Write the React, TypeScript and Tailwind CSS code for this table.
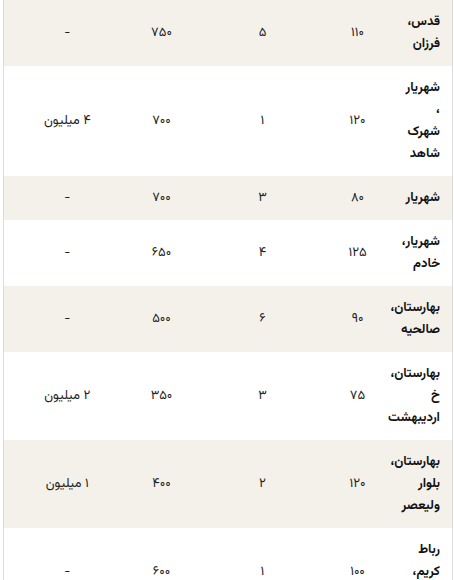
type Row = {
  area: string[];
  size: string;
  rooms: string;
  price: string;
  deposit: string;
};

const rows: Row[] = [
  { area: ["قدس،", "فرزان"], size: "۱۱۰", rooms: "۵", price: "۷۵۰", deposit: "-" },
  { area: ["شهریار", "،", "شهرک", "شاهد"], size: "۱۲۰", rooms: "۱", price: "۷۰۰", deposit: "۴ میلیون" },
  { area: ["شهریار"], size: "۸۰", rooms: "۳", price: "۷۰۰", deposit: "-" },
  { area: ["شهریار،", "خادم"], size: "۱۲۵", rooms: "۴", price: "۶۵۰", deposit: "-" },
  { area: ["بهارستان،", "صالحیه"], size: "۹۰", rooms: "۶", price: "۵۰۰", deposit: "-" },
  { area: ["بهارستان،", "خ", "اردیبهشت"], size: "۷۵", rooms: "۳", price: "۳۵۰", deposit: "۲ میلیون" },
  { area: ["بهارستان،", "بلوار", "ولیعصر"], size: "۱۲۰", rooms: "۲", price: "۴۰۰", deposit: "۱ میلیون" },
  { area: ["رباط", "کریم،", "نصیرآباد"], size: "۱۰۰", rooms: "۱", price: "۶۰۰", deposit: "-" },
];

export default function App() {
  return (
    <div className="min-h-screen bg-white pl-[3px] overflow-hidden">
      <table
        dir="rtl"
        className="w-[450px] table-fixed border-collapse border-x border-[#dcdcdc] text-[13px] leading-[22px] text-[#222]"
        style={{ fontFamily: '"Vazirmatn", "Noto Sans Arabic", "DejaVu Sans", sans-serif' }}
      >
        <colgroup>
          <col className="w-[70px]" />
          <col className="w-[50px]" />
          <col className="w-[140px]" />
          <col className="w-[62px]" />
          <col />
        </colgroup>
        <tbody>
          {rows.map((r, i) => (
            <tr key={i} className={i % 2 === 0 ? "bg-[#f4f1eb]" : "bg-white"}>
              <td className="py-[11px] pr-3 text-right align-middle font-bold text-[#111]">
                {r.area.map((line, j) => (
                  <div key={j}>{line}</div>
                ))}
              </td>
              <td className="text-center align-middle">{r.size}</td>
              <td className="text-center align-middle">{r.rooms}</td>
              <td className="text-center align-middle">{r.price}</td>
              <td className="text-center align-middle">{r.deposit}</td>
            </tr>
          ))}
        </tbody>
      </table>
    </div>
  );
}
